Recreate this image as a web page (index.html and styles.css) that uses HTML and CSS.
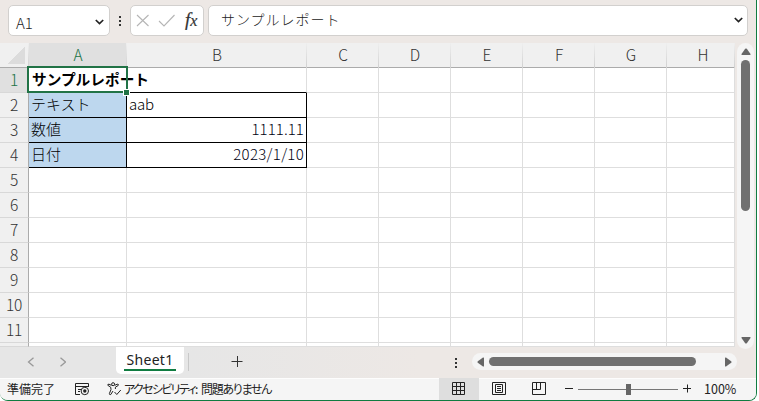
FILE: index.html
```html
<!DOCTYPE html>
<html lang="ja">
<head>
<meta charset="utf-8">
<title>Sheet1</title>
<link rel="stylesheet" href="styles.css">
</head>
<body>
<div class="window">
  <div class="formula-bar">
    <div class="box name-box"><span>A1</span>
      <svg width="9" height="6" viewBox="0 0 9 6"><path class="chev" d="M.8 1 4.5 4.6 8.2 1"/></svg></div>
    <svg class="dots" width="4" height="12" viewBox="0 0 4 12"><path d="M1 1h2v2H1zM1 5h2v2H1zM1 9h2v2H1z"/></svg>
    <div class="box fx-box">
      <svg width="72" height="29" viewBox="0 0 72 29"><path class="muted" d="M6 9 17.500 20M17.500 9 6 20M28 15l5 5L43.500 9"/></svg>
      <span class="fx"><span>f</span>x</span>
    </div>
    <div class="box formula"><span>サンプルレポート</span>
      <svg width="9" height="6" viewBox="0 0 9 6"><path class="chev" d="M.8 1 4.5 4.6 8.2 1"/></svg></div>
  </div>
  <div class="work">
    <div class="grid">
      <div class="ch corner"></div><div class="ch active">A</div><div class="ch">B</div><div class="ch">C</div><div class="ch">D</div><div class="ch">E</div><div class="ch">F</div><div class="ch">G</div><div class="ch end">H</div>
      <div class="rh active">1</div><div class="c sel"><span class="title">サンプルレポート</span></div><div class="c edge-b"></div><div class="c"></div><div class="c"></div><div class="c"></div><div class="c"></div><div class="c"></div><div class="c"></div>
      <div class="rh">2</div><div class="c blue kana">テキスト</div><div class="c val">aab</div><div class="c"></div><div class="c"></div><div class="c"></div><div class="c"></div><div class="c"></div><div class="c"></div>
      <div class="rh">3</div><div class="c blue">数値</div><div class="c val num">1111.11</div><div class="c"></div><div class="c"></div><div class="c"></div><div class="c"></div><div class="c"></div><div class="c"></div>
      <div class="rh">4</div><div class="c blue">日付</div><div class="c val num date">2023/1/10</div><div class="c"></div><div class="c"></div><div class="c"></div><div class="c"></div><div class="c"></div><div class="c"></div>
      <div class="rh">5</div><div class="c"></div><div class="c"></div><div class="c"></div><div class="c"></div><div class="c"></div><div class="c"></div><div class="c"></div><div class="c"></div>
      <div class="rh">6</div><div class="c"></div><div class="c"></div><div class="c"></div><div class="c"></div><div class="c"></div><div class="c"></div><div class="c"></div><div class="c"></div>
      <div class="rh">7</div><div class="c"></div><div class="c"></div><div class="c"></div><div class="c"></div><div class="c"></div><div class="c"></div><div class="c"></div><div class="c"></div>
      <div class="rh">8</div><div class="c"></div><div class="c"></div><div class="c"></div><div class="c"></div><div class="c"></div><div class="c"></div><div class="c"></div><div class="c"></div>
      <div class="rh">9</div><div class="c"></div><div class="c"></div><div class="c"></div><div class="c"></div><div class="c"></div><div class="c"></div><div class="c"></div><div class="c"></div>
      <div class="rh">10</div><div class="c"></div><div class="c"></div><div class="c"></div><div class="c"></div><div class="c"></div><div class="c"></div><div class="c"></div><div class="c"></div>
      <div class="rh">11</div><div class="c"></div><div class="c"></div><div class="c"></div><div class="c"></div><div class="c"></div><div class="c"></div><div class="c"></div><div class="c"></div>
      <div class="rh last"></div><div class="c last"></div><div class="c last"></div><div class="c last"></div><div class="c last"></div><div class="c last"></div><div class="c last"></div><div class="c last"></div><div class="c last"></div>
    </div>
    <div class="vscroll">
      <svg width="10" height="8" viewBox="0 0 10 8"><path d="M4.200.800Q5 0 5.800.800L9.500 6Q9.800 7 9 7H1Q.2 7 .5 6z"/></svg>
      <div class="vthumb"></div>
      <svg class="down" width="10" height="8" viewBox="0 0 10 8"><path d="M4.200 7.200Q5 8 5.800 7.200L9.500 2Q9.800 1 9 1H1Q.2 1 .5 2z"/></svg>
    </div>
  </div>
  <div class="tabs">
    <div class="nav">
      <svg width="40" height="10" viewBox="0 0 40 10"><path class="navline" d="M7.500.800 2.500 5l5 4.200M34.500.800l5 4.200-5 4.200"/></svg>
    </div>
    <div class="tab"><span>Sheet1</span></div>
    <div class="sep"></div>
    <svg class="plus" width="12" height="12" viewBox="0 0 12 12"><path d="M.5 6.500h11M6.500 1v11"/></svg>
    <svg class="dots tabdots" width="4" height="12" viewBox="0 0 4 12"><path d="M1 1h2v2H1zM1 5h2v2H1zM1 9h2v2H1z"/></svg>
    <div class="hscroll">
      <svg width="8" height="10" viewBox="0 0 8 10"><path d="M.8 4.200Q0 5 .8 5.800L6 9.500Q7 9.800 7 9V1Q7 .2 6 .5z"/></svg>
      <div class="hthumb"></div>
      <svg class="right" width="8" height="10" viewBox="0 0 8 10"><path d="M7.200 4.200Q8 5 7.200 5.800L2 9.500Q1 9.800 1 9V1Q1 .2 2 .5z"/></svg>
    </div>
  </div>
  <div class="status">
    <span class="ready">準備完了</span>
    <svg class="macro" width="16" height="14" viewBox="0 0 16 14"><path class="ink" d="M5 12.500H.5V1.500h13V5M.5 4.500h13M3 7.500h3M3 9.500h2"/><circle class="ink" cx="9.800" cy="9" r="3.700"/><circle cx="9.800" cy="9" r="1.700"/></svg>
    <svg class="acc" width="15" height="14" viewBox="0 0 15 14"><path class="ink" d="M4.600 2.200a1.500 1.500 0 1 1 3 0 1.500 1.500 0 0 1-3 0M4.500 3.400 2 2.200Q.5 2 .8 3.300L3.700 5.200 4 7.500 2.400 11.500Q2.300 13 3.700 12.600L6 9M7.700 3.400 10.200 2.200Q12 2 11.200 3.500L8.400 5.200V7M7.500 10l2.300 2.500 4-4.500"/></svg>
    <span class="acctext"><span>アクセシビリティ:</span> 問題ありません</span>
    <div class="view on"><svg width="14" height="14" viewBox="0 0 14 14"><path class="ink" d="M.5.500h12v12H.5zM.5 4.500h12M.5 8.500h12M4.500.500v12M8.500.500v12"/></svg></div>
    <div class="view"><svg width="14" height="14" viewBox="0 0 14 14"><path class="ink" d="M.5.500h13v12H.5zM3.500 2.500h7v8h-7zM5 4.500h4M5 6.500h4M5 8.500h4"/></svg></div>
    <div class="view"><svg width="14" height="14" viewBox="0 0 14 14"><path class="ink" d="M.5.500h13v12H.5zM.5 7.500h8V.5M4.500.500v7"/></svg></div>
    <svg class="zoom" width="128" height="12" viewBox="0 0 128 12"><path class="ink" d="M0 5.500h8M118 5.500h8M122.500 1.500v8"/><path class="track" d="M13 6.500h100"/><path class="knob" d="M61 1h5v11h-5z"/></svg>
    <span class="pct">100%</span>
  </div>
</div>
</body>
</html>
```
FILE: styles.css
```css
* { box-sizing: border-box; }
body {
  margin: 0;
  width: 759px;
  height: 401px;
  overflow: hidden;
  background: #fff;
  font-family: "Noto Sans CJK JP", sans-serif;
  color: #222;
}
svg { display: block; flex: none; fill: #666; }
.window {
  width: 757px;
  height: 401px;
  background: #ede8e5;
  border-right: 1px solid #107c41;
  border-bottom: 1px solid #107c41;
  border-bottom-left-radius: 8px;
  border-bottom-right-radius: 8px;
  overflow: hidden;
}
.formula-bar {
  display: flex;
  align-items: flex-start;
  height: 43px;
  padding: 5px 0 0 8px;
}
.box {
  display: flex;
  align-items: center;
  height: 31px;
  background: #fff;
  border: 1px solid #d2d0ce;
  border-radius: 5px;
}
.name-box {
  width: 102px;
  justify-content: space-between;
  padding: 3px 5px 0 7px;
  font-size: 15px;
  font-weight: 300;
}
.chev { fill: none; stroke: #222; stroke-width: 1.7; }
.dots { fill: #333; margin: 10px 8px 0; }
.fx-box { width: 74px; }
.fx-box svg { margin-right: -28px; }
.muted { fill: none; stroke: #b5b5b5; stroke-width: 1.1; }
.fx {
  font: italic 16px/20px "Liberation Serif", serif;
  -webkit-text-stroke: 0.2px #333;
  color: #333;
  margin-left: 10px;
}
.fx span { font-size: 19px; }
.formula {
  width: 540px;
  margin-left: 4px;
  padding: 0 4px 2px 12px;
  justify-content: space-between;
  font-size: 14px;
  font-weight: 300;
  letter-spacing: 1px;
}
.formula span { margin-top: -2px; }
.work { display: flex; height: 303px; }
.grid {
  display: grid;
  width: 735px;
  grid-template-columns: 29px 98px 180px repeat(5, 72px) 68px;
  grid-template-rows: repeat(12, 25px) 4px;
}
.ch, .rh {
  background: #f0f0f0;
  color: #333;
  font-weight: 300;
  font-size: 15.5px;
  line-height: 22px;
  text-align: center;
}
.ch {
  border-right: 1px solid;
  border-image: linear-gradient(#f0f0f0, #cfcfcf) 1;
  box-shadow: inset 0 -1px #ababab;
  height: 25px;
  padding-left: 1px;
}
.ch.end { padding-left: 5px; }
.rh {
  border-right: 1px solid #ababab;
  border-bottom: 1px solid #d8d8d8;
  letter-spacing: -0.2px;
}
.corner { background: linear-gradient(135deg, transparent 50%, #dcdcdc 50%) 8px 4px / 17px 17px no-repeat #f0f0f0; }
.ch.active, .rh.active { background: #e0e0e0; color: #217346; }
.c {
  position: relative;
  min-width: 0;
  background: #fff;
  border-right: 1px solid #dedede;
  border-bottom: 1px solid #dedede;
  font-size: 15px;
  font-weight: 300;
  line-height: 22px;
  padding: 0 2px;
  color: #000;
  white-space: nowrap;
}
.edge-b { border-bottom-color: #000; }
.blue { background: #bdd7ee; border-color: #000; }
.val { border-color: #000; letter-spacing: -0.2px; }
.num { text-align: right; letter-spacing: 0.1px; padding-right: 2px; color: #001; }
.date { letter-spacing: 0.3px; }
.sel { z-index: 2; padding-left: 3px; }
.sel::before {
  content: "";
  position: absolute;
  z-index: 1;
  inset: -2px -2px -1px -2px;
  border: 2px solid #217346;
}
.sel::after {
  content: "";
  position: absolute;
  z-index: 1;
  right: -3px;
  bottom: -3px;
  width: 5px;
  height: 5px;
  background: #217346;
  box-shadow: 0 0 0 1px #fff;
}
.title { font-weight: 700; font-size: 14.7px; color: #000; }
.last { height: 4px; }
.vscroll {
  position: relative;
  z-index: 1;
  width: 17px;
  height: 306px;
  margin-left: 2px;
  border-radius: 9px;
  background: #f5f5f5;
  display: flex;
  flex-direction: column;
  align-items: center;
  padding: 5px 0;
}
.vthumb { width: 9px; height: 151px; margin-top: 4px; border-radius: 5px; background: #707070; }
.vscroll .down { margin-top: auto; }
.tabs {
  display: flex;
  height: 32px;
  background: linear-gradient(90deg, #e6e6e6 0 190px, #ede8e5 420px);
}
.nav { width: 116px; padding: 11px 0 0 26px; }
.navline { fill: none; stroke: #999; stroke-width: 1.3; }
.tab {
  width: 68px;
  height: 28px;
  padding: 0 8px;
  background: #fff;
  border-radius: 0 0 5px 5px;
}
.tab span {
  display: block;
  height: 25px;
  border-bottom: 2px solid #107c41;
  text-align: center;
  font: 14px/27px "Noto Sans", sans-serif;
  letter-spacing: 0.3px;
  white-space: nowrap;
}
.sep { width: 1px; height: 18px; margin: 7px 0 0 4px; background: #c8c8c8; }
.plus { margin: 9px 0 0 42px; stroke: #333; }
.tabdots { margin: 11px 14px 0 auto; }
.hscroll {
  width: 265px;
  height: 17px;
  margin: 7px 19px 0 0;
  padding: 0 5px;
  border-radius: 9px;
  background: #f5f5f5;
  display: flex;
  align-items: center;
}
.hthumb { width: 207px; height: 9px; margin-left: 4px; border-radius: 5px; background: #707070; }
.right { margin-left: auto; }
.status {
  display: flex;
  align-items: center;
  height: 22px;
  background: #f5f5f5;
  box-shadow: inset 0 1px #fdfdfd;
  font-size: 12px;
  line-height: 20px;
  padding-left: 7px;
  white-space: nowrap;
}
.ink { fill: none; stroke: #222; stroke-width: 1; }
.ready { width: 68px; }
.acc { margin-left: 16px; }
.acctext { width: 149px; margin-left: 2px; font-feature-settings: "palt"; letter-spacing: -1.3px; }
.acctext span { letter-spacing: -1.65px; margin-right: 3px; }
.macro { fill: #222; }
.view { width: 40px; height: 22px; display: flex; align-items: center; justify-content: center; }
.view.on { margin-left: auto; background: #dedede; }
.zoom { margin-left: 6px; }
.track { stroke: #777; }
.knob { fill: #666; }
.pct { width: 63px; padding-left: 11px; font-size: 12.5px; }
```
